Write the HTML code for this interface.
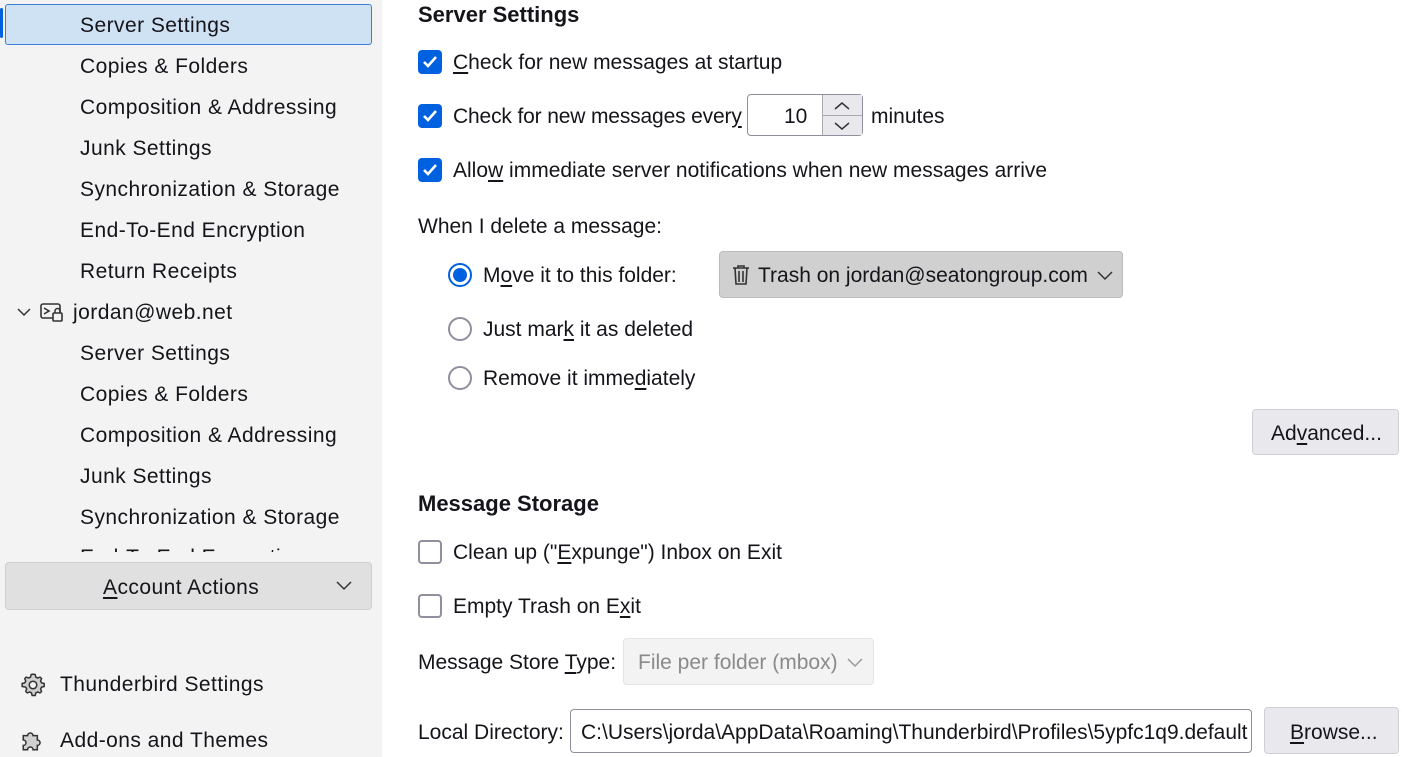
<!DOCTYPE html>
<html><head><style>
*{margin:0;padding:0;box-sizing:border-box}
body{width:1402px;height:757px;overflow:hidden;background:#fff;font-family:"Liberation Sans",sans-serif;font-size:21px;letter-spacing:0;color:#15141a;position:relative}
.a{position:absolute;white-space:nowrap;line-height:24px}
#side{position:absolute;left:0;top:0;width:382px;height:757px;background:#f3f3f3;letter-spacing:0.45px}
.h{font-weight:bold;font-size:22px;letter-spacing:0}
.cb{position:absolute;width:24px;height:24px;border-radius:4px;background:#0061e0;}
.cb svg{position:absolute;left:3px;top:3px}
.cbe{position:absolute;width:24px;height:24px;border-radius:4px;border:2px solid #8f8f9d;background:#fff}
.rd{position:absolute;width:24px;height:24px;border-radius:50%;border:2px solid #8f8f9d;background:#fff}
.rdon{border:2px solid #0061e0}
.rdon::after{content:"";position:absolute;left:3px;top:3px;width:14px;height:14px;border-radius:50%;background:#0061e0}
.btn{position:absolute;background:#e9e9ed;border:1px solid #cfcfd8;border-radius:4px}
u{text-decoration:underline;text-underline-offset:3px}
</style></head><body>
<div id="side">
<div style="position:absolute;left:5px;top:4px;width:367px;height:41px;background:#cfe2f3;border:1px solid #3d7fd6;border-radius:3px"></div>
<div style="position:absolute;left:0;top:8px;width:3px;height:30px;background:#0061e0;border-radius:2px"></div>
<div class="a" style="left:80px;top:14px">Server Settings</div>
<div class="a" style="left:80px;top:55px">Copies &amp; Folders</div>
<div class="a" style="left:80px;top:96px">Composition &amp; Addressing</div>
<div class="a" style="left:80px;top:137px">Junk Settings</div>
<div class="a" style="left:80px;top:178px">Synchronization &amp; Storage</div>
<div class="a" style="left:80px;top:219px">End-To-End Encryption</div>
<div class="a" style="left:80px;top:260px">Return Receipts</div>
<svg class="a" style="left:16px;top:305px" width="16" height="14"><path d="M2 4l6 6 6-6" fill="none" stroke="#333" stroke-width="1.5"/></svg>
<svg class="a" style="left:40px;top:302px" width="24" height="20"><rect x="1" y="2" width="19" height="14" rx="2" fill="none" stroke="#333" stroke-width="1.6"/><path d="M4 6l5 3-5 3" fill="none" stroke="#333" stroke-width="1.6"/><rect x="13" y="11" width="9" height="8" rx="1" fill="#f3f3f3" stroke="#333" stroke-width="1.6"/><path d="M15 11v-2a2.5 2.5 0 0 1 5 0v2" fill="none" stroke="#333" stroke-width="1.5"/></svg>
<div class="a" style="left:73px;top:301px">jordan@web.net</div>
<div class="a" style="left:80px;top:342px">Server Settings</div>
<div class="a" style="left:80px;top:383px">Copies &amp; Folders</div>
<div class="a" style="left:80px;top:424px">Composition &amp; Addressing</div>
<div class="a" style="left:80px;top:465px">Junk Settings</div>
<div class="a" style="left:80px;top:506px">Synchronization &amp; Storage</div>
<div style="position:absolute;left:0;top:540px;width:382px;height:12px;overflow:hidden"><div class="a" style="left:80px;top:6px">End-To-End Encryption</div></div>
<div class="btn" style="left:5px;top:562px;width:367px;height:48px;background:#e0e0e0;border-color:#cfcfcf"></div>
<div class="a" style="left:103px;top:576px"><u>A</u>ccount Actions</div>
<svg class="a" style="left:335px;top:578px" width="18" height="14"><path d="M2 4l7 7 7-7" fill="none" stroke="#333" stroke-width="1.5"/></svg>
<svg class="a" style="left:20px;top:672px" width="26" height="26" viewBox="0 0 24 24"><path d="M12 2l2 .3.6 2.4 1.6.9 2.3-.9 1.4 1.4-.9 2.3.9 1.6 2.4.6v2.8l-2.4.6-.9 1.6.9 2.3-1.4 1.4-2.3-.9-1.6.9-.6 2.4h-2.8l-.6-2.4-1.6-.9-2.3.9-1.4-1.4.9-2.3-.9-1.6L2 13.4v-2.8l2.4-.6.9-1.6-.9-2.3 1.4-1.4 2.3.9 1.6-.9.6-2.4z" fill="#d0d0d0" stroke="#333" stroke-width="1.4"/><circle cx="12" cy="12" r="3.5" fill="#f3f3f3" stroke="#333" stroke-width="1.4"/></svg>
<div class="a" style="left:60px;top:673px">Thunderbird Settings</div>
<svg class="a" style="left:19px;top:727px" width="28" height="26" viewBox="0 0 24 24"><path d="M3 8h4a2.5 2.5 0 1 1 5 0h4v4a2.5 2.5 0 1 1 0 5v4h-4a2.5 2.5 0 1 0-5 0H3v-4a2.5 2.5 0 1 0 0-5z" fill="#d0d0d0" stroke="#333" stroke-width="1.4"/></svg>
<div class="a" style="left:60px;top:729px">Add-ons and Themes</div>
</div>

<div class="a h" style="left:418px;top:3px">Server Settings</div>
<div class="cb" style="left:418px;top:50px"><svg width="18" height="18"><path d="M3 9l4 4 8-9" fill="none" stroke="#fff" stroke-width="2.6"/></svg></div>
<div class="a" style="left:453px;top:51px"><u>C</u>heck for new messages at startup</div>
<div class="cb" style="left:418px;top:104px"><svg width="18" height="18"><path d="M3 9l4 4 8-9" fill="none" stroke="#fff" stroke-width="2.6"/></svg></div>
<div class="a" style="left:453px;top:105px;letter-spacing:-0.15px">Check for new messages ever<u>y</u></div>
<div style="position:absolute;left:747px;top:94px;width:116px;height:42px;border:1px solid #8f8f9d;border-radius:4px;background:#fff"></div>
<div class="a" style="left:784px;top:105px">10</div>
<div style="position:absolute;left:822px;top:95px;width:40px;height:40px;background:#e9e9ed;border-left:1px solid #aaa"></div>
<div style="position:absolute;left:822px;top:115px;width:40px;height:1px;background:#aaa"></div>
<svg class="a" style="left:832px;top:99px" width="20" height="34"><path d="M3 10l7-6 7 6M3 24l7 6 7-6" fill="none" stroke="#333" stroke-width="1.5"/></svg>
<div class="a" style="left:871px;top:105px">minutes</div>
<div class="cb" style="left:418px;top:158px"><svg width="18" height="18"><path d="M3 9l4 4 8-9" fill="none" stroke="#fff" stroke-width="2.6"/></svg></div>
<div class="a" style="left:453px;top:159px">Allo<u>w</u> immediate server notifications when new messages arrive</div>
<div class="a" style="left:418px;top:215px">When I delete a message:</div>
<div class="rd rdon" style="left:448px;top:263px"></div>
<div class="a" style="left:483px;top:264px">M<u>o</u>ve it to this folder:</div>
<div class="btn" style="left:719px;top:251px;width:404px;height:47px;background:#d0d0d0;border-color:#bbb"></div>
<svg class="a" style="left:731px;top:264px" width="20" height="22"><path d="M2 4h16M7 4V2h6v2M4 4l1 16h10l1-16M8 7v11M12 7v11" fill="none" stroke="#333" stroke-width="1.6"/></svg>
<div class="a" style="left:758px;top:264px">Trash on jordan@seatongroup.com</div>
<svg class="a" style="left:1096px;top:268px" width="18" height="14"><path d="M2 4l7 7 7-7" fill="none" stroke="#333" stroke-width="1.5"/></svg>
<div class="rd" style="left:448px;top:317px"></div>
<div class="a" style="left:483px;top:318px">Just mar<u>k</u> it as deleted</div>
<div class="rd" style="left:448px;top:366px"></div>
<div class="a" style="left:483px;top:367px">Remove it imme<u>d</u>iately</div>
<div class="btn" style="left:1252px;top:409px;width:147px;height:46px"></div>
<div class="a" style="left:1271px;top:422px">Ad<u>v</u>anced...</div>

<div class="a h" style="left:418px;top:492px">Message Storage</div>
<div class="cbe" style="left:418px;top:540px"></div>
<div class="a" style="left:453px;top:541px">Clean up ("<u>E</u>xpunge") Inbox on Exit</div>
<div class="cbe" style="left:418px;top:594px"></div>
<div class="a" style="left:453px;top:595px">Empty Trash on E<u>x</u>it</div>
<div class="a" style="left:418px;top:651px">Message Store <u>T</u>ype:</div>
<div class="btn" style="left:623px;top:638px;width:251px;height:47px;background:#f3f3f3;border-color:#e4e4e4"></div>
<div class="a" style="left:638px;top:651px;color:#8a8a8a">File per folder (mbox)</div>
<svg class="a" style="left:846px;top:655px" width="18" height="14"><path d="M2 4l7 7 7-7" fill="none" stroke="#999" stroke-width="1.5"/></svg>
<div class="a" style="left:418px;top:721px">Local Directory:</div>
<div style="position:absolute;left:570px;top:709px;width:682px;height:44px;border:1px solid #8f8f9d;border-radius:4px;overflow:hidden;background:#fff"><div class="a" style="left:10px;top:11px">C:\Users\jorda\AppData\Roaming\Thunderbird\Profiles\5ypfc1q9.default</div></div>
<div class="btn" style="left:1264px;top:707px;width:135px;height:47px"></div>
<div class="a" style="left:1290px;top:721px"><u>B</u>rowse...</div>
</body></html>
